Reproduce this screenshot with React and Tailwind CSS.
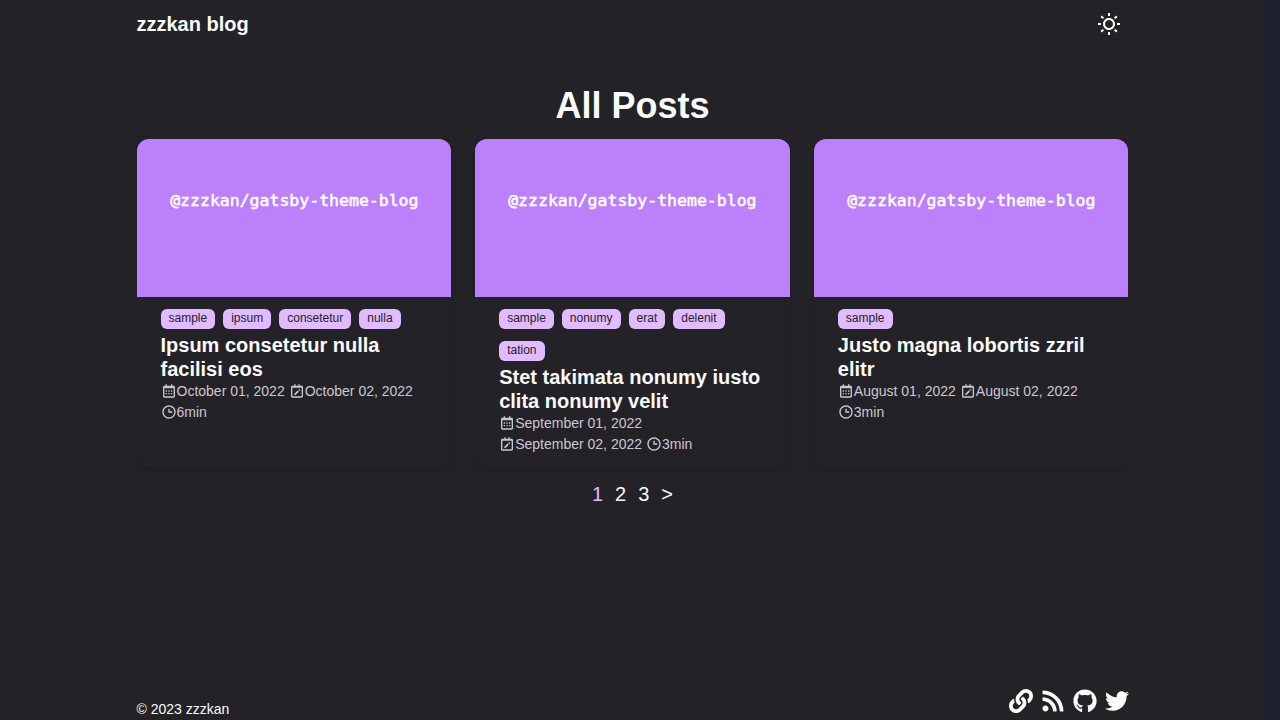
import React from "react";
import { BiCalendar, BiCalendarEdit, BiTime } from "react-icons/bi";
import { FaGithub, FaLink, FaRss, FaTwitter } from "react-icons/fa";
import { RiSunLine } from "react-icons/ri";

const posts = [
  {
    title: "Ipsum consetetur nulla facilisi eos",
    tags: ["sample", "ipsum", "consetetur", "nulla"],
    created: "October 01, 2022",
    updated: "October 02, 2022",
    time: "6min",
  },
  {
    title: "Stet takimata nonumy iusto clita nonumy velit",
    tags: ["sample", "nonumy", "erat", "delenit", "tation"],
    created: "September 01, 2022",
    updated: "September 02, 2022",
    time: "3min",
  },
  {
    title: "Justo magna lobortis zzril elitr",
    tags: ["sample"],
    created: "August 01, 2022",
    updated: "August 02, 2022",
    time: "3min",
  },
];

const socials = [
  { label: "Website", Icon: FaLink },
  { label: "RSS", Icon: FaRss },
  { label: "GitHub", Icon: FaGithub },
  { label: "Twitter", Icon: FaTwitter },
];

function Cover() {
  return (
    <svg viewBox="0 0 1200 603" className="block aspect-[400/201] w-full rounded-t-xl bg-[#bb80fa]">
      <text
        x="600"
        y="254"
        textAnchor="middle"
        fontSize="63"
        fill="#ffffff"
        stroke="#ffffff"
        strokeWidth="2"
        className="font-['DejaVu_Sans_Mono',monospace]"
      >
        @zzzkan/gatsby-theme-blog
      </text>
    </svg>
  );
}

function Meta({ Icon, children }) {
  return (
    <span className="flex items-start">
      <Icon className="mt-0.5 size-4" />
      {children}
    </span>
  );
}

function PostCard({ post }) {
  return (
    <article className="rounded-xl shadow-[0_4px_6px_rgba(0,0,0,0.1)]">
      <a href="#post" aria-label={post.title}>
        <Cover />
      </a>
      <div className="px-6 py-3">
        <ul className="flex flex-wrap gap-x-2 gap-y-3">
          {post.tags.map((tag) => (
            <li key={tag} className="flex">
              <a href="#tag" className="rounded-md bg-[#e0bbff] px-2 pb-0.5 text-xs leading-[18px] text-[#232227]">
                {tag}
              </a>
            </li>
          ))}
        </ul>
        <h2 className="mt-1 text-xl leading-6 font-bold">
          <a href="#post">{post.title}</a>
        </h2>
        <div className="flex flex-wrap gap-x-1 text-sm leading-[21px] text-[#cbc7d1]">
          <Meta Icon={BiCalendar}>{post.created}</Meta>
          <Meta Icon={BiCalendarEdit}>{post.updated}</Meta>
          <Meta Icon={BiTime}>{post.time}</Meta>
        </div>
      </div>
    </article>
  );
}

export default function App() {
  return (
    <div className="flex min-h-screen bg-[#232227] font-['Liberation_Sans',Arial,sans-serif] text-[#fafafa]">
      <div className="flex min-w-0 flex-1 justify-center">
        <div className="flex w-full max-w-[992px] flex-col">
          <header className="flex h-12 items-center justify-between">
            <a href="#home" className="text-xl font-bold">
              zzzkan blog
            </a>
            <button type="button" aria-label="Toggle theme" className="px-2">
              <RiSunLine className="size-6" />
            </button>
          </header>
          <main className="flex-1 pt-9">
            <h1 className="text-center text-4xl leading-[43px] font-bold">All Posts</h1>
            <div className="mt-3 grid grid-cols-3 gap-6">
              {posts.map((post) => (
                <PostCard key={post.title} post={post} />
              ))}
            </div>
            <nav aria-label="Pagination" className="mt-3 flex justify-center gap-3 text-xl leading-[30px]">
              <a href="#1" aria-current="page" className="text-[#e0bbff]">
                1
              </a>
              <a href="#2">2</a>
              <a href="#3">3</a>
              <a href="#next" aria-label="Next page">
                &gt;
              </a>
            </nav>
          </main>
          <footer className="flex items-end justify-between">
            <small className="text-sm leading-[21px]">© 2023 zzzkan</small>
            <div className="flex gap-2 pb-[7px]">
              {socials.map(({ label, Icon }) => (
                <a key={label} href="#social" aria-label={label}>
                  <Icon className="size-6" />
                </a>
              ))}
            </div>
          </footer>
        </div>
      </div>
      <div className="w-[15px] shrink-0 bg-[#1b222d]" />
    </div>
  );
}
